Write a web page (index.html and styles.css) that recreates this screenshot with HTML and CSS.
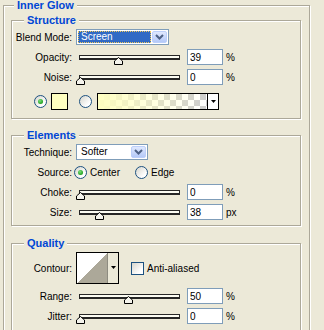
FILE: index.html
```html
<!DOCTYPE html>
<html lang="en">
<head>
    <meta charset="UTF-8">
    <meta name="viewport" content="width=device-width, initial-scale=1.0">
    <title>Inner Glow</title>
    <link rel="stylesheet" href="styles.css">
</head>
<body>
    <fieldset class="panel">
        <legend class="panel-title">Inner Glow</legend>

        <fieldset class="group structure">
            <legend class="group-title">Structure</legend>
            <div class="row">
                <span class="label">Blend Mode:</span>
                <div class="select select-blend">
                    <span class="select-value selected">Screen</span>
                    <span class="select-button">
                        <svg width="9" height="6" viewBox="0 0 9 6"><polyline points="1,1 4.5,4.5 8,1" fill="none" stroke="#4d6185" stroke-width="2"/></svg>
                    </span>
                </div>
            </div>
            <div class="row">
                <span class="label">Opacity:</span>
                <div class="slider">
                    <div class="track"></div>
                    <svg class="thumb" style="left: 35px" width="9" height="8" viewBox="0 0 9 8"><path d="M4.5 0.5 L8.5 4 V7.5 H0.5 V4 Z" fill="#f4f3ec" stroke="#000"/></svg>
                </div>
                <input class="field" type="text" value="39">
                <span class="unit">%</span>
            </div>
            <div class="row">
                <span class="label">Noise:</span>
                <div class="slider">
                    <div class="track"></div>
                    <svg class="thumb" style="left: -3px" width="9" height="8" viewBox="0 0 9 8"><path d="M4.5 0.5 L8.5 4 V7.5 H0.5 V4 Z" fill="#f4f3ec" stroke="#000"/></svg>
                </div>
                <input class="field" type="text" value="0">
                <span class="unit">%</span>
            </div>
            <div class="row color-row">
                <span class="radio checked"></span>
                <span class="swatch"></span>
                <span class="radio radio-gradient"></span>
                <div class="gradient">
                    <span class="gradient-fill"></span>
                    <span class="gradient-button">
                        <svg width="5" height="3" viewBox="0 0 5 3"><polygon points="0,0 5,0 2.5,3" fill="#000"/></svg>
                    </span>
                </div>
            </div>
        </fieldset>

        <fieldset class="group elements">
            <legend class="group-title">Elements</legend>
            <div class="row">
                <span class="label">Technique:</span>
                <div class="select select-technique">
                    <span class="select-value">Softer</span>
                    <span class="select-button">
                        <svg width="9" height="6" viewBox="0 0 9 6"><polyline points="1,1 4.5,4.5 8,1" fill="none" stroke="#4d6185" stroke-width="2"/></svg>
                    </span>
                </div>
            </div>
            <div class="row">
                <span class="label">Source:</span>
                <div class="options">
                    <span class="option"><span class="radio checked"></span><span class="option-text">Center</span></span>
                    <span class="option"><span class="radio"></span><span class="option-text">Edge</span></span>
                </div>
            </div>
            <div class="row">
                <span class="label">Choke:</span>
                <div class="slider">
                    <div class="track"></div>
                    <svg class="thumb" style="left: -3px" width="9" height="8" viewBox="0 0 9 8"><path d="M4.5 0.5 L8.5 4 V7.5 H0.5 V4 Z" fill="#f4f3ec" stroke="#000"/></svg>
                </div>
                <input class="field" type="text" value="0">
                <span class="unit">%</span>
            </div>
            <div class="row">
                <span class="label">Size:</span>
                <div class="slider">
                    <div class="track"></div>
                    <svg class="thumb" style="left: 16px" width="9" height="8" viewBox="0 0 9 8"><path d="M4.5 0.5 L8.5 4 V7.5 H0.5 V4 Z" fill="#f4f3ec" stroke="#000"/></svg>
                </div>
                <input class="field" type="text" value="38">
                <span class="unit">px</span>
            </div>
        </fieldset>

        <fieldset class="group quality">
            <legend class="group-title">Quality</legend>
            <div class="row contour-row">
                <span class="label">Contour:</span>
                <div class="contour">
                    <svg class="contour-preview" width="30" height="30" viewBox="0 0 30 30" shape-rendering="crispEdges">
                        <rect width="30" height="30" fill="#fff"/>
                        <polygon points="0,30 30,0 30,30" fill="#aca899"/>
                    </svg>
                    <span class="contour-button">
                        <svg width="5" height="3" viewBox="0 0 5 3"><polygon points="0,0 5,0 2.5,3" fill="#000"/></svg>
                    </span>
                </div>
                <span class="checkbox"></span>
                <span class="check-text">Anti-aliased</span>
            </div>
            <div class="row">
                <span class="label">Range:</span>
                <div class="slider">
                    <div class="track"></div>
                    <svg class="thumb" style="left: 45px" width="9" height="8" viewBox="0 0 9 8"><path d="M4.5 0.5 L8.5 4 V7.5 H0.5 V4 Z" fill="#f4f3ec" stroke="#000"/></svg>
                </div>
                <input class="field" type="text" value="50">
                <span class="unit">%</span>
            </div>
            <div class="row">
                <span class="label">Jitter:</span>
                <div class="slider">
                    <div class="track"></div>
                    <svg class="thumb" style="left: -3px" width="9" height="8" viewBox="0 0 9 8"><path d="M4.5 0.5 L8.5 4 V7.5 H0.5 V4 Z" fill="#f4f3ec" stroke="#000"/></svg>
                </div>
                <input class="field" type="text" value="0">
                <span class="unit">%</span>
            </div>
        </fieldset>
    </fieldset>
</body>
</html>
```

FILE: styles.css
```css
body {
    margin: 0;
    background-color: #ece9d8;
    font-family: "Liberation Sans", Arial, sans-serif;
    font-size: 10px;
    color: #000;
}
.panel {
    width: 307px;
    box-sizing: border-box;
    margin: 0 0 0 3px;
    padding: 4px 8px 10px 7px;
    border: 1px solid #aca899;
    box-shadow: inset 1px 1px 0 #fff, 1px 1px 0 #fff;
    min-inline-size: 0;
}
.panel-title,
.group-title {
    padding: 0 3px;
    font-weight: bold;
    font-size: 11px;
    line-height: 11px;
    color: #0046d5;
    background-color: #ece9d8;
}
.panel-title {
    margin-left: 3px;
}
.group-title {
    margin-left: 12px;
}
.group {
    margin: 0;
    padding: 3px 0 8px;
    border: 1px solid #aca899;
    box-shadow: inset 1px 1px 0 #fff, 1px 1px 0 #fff;
    min-inline-size: 0;
}
.elements {
    margin-top: 11px;
    padding-bottom: 5px;
}
.quality {
    margin-top: 12px;
}
.row {
    display: flex;
    align-items: center;
    height: 16px;
}
.row + .row {
    margin-top: 4px;
}
.label {
    flex: none;
    width: 60px;
    margin-right: 4px;
    text-align: right;
}

/* combo boxes */
.select {
    display: flex;
    box-sizing: border-box;
    height: 16px;
    padding: 1px;
    border: 1px solid #7f9db9;
    background-color: #fff;
}
.select-blend {
    width: 93px;
}
.select-technique {
    width: 72px;
}
.select-value {
    flex: 1;
    padding-left: 3px;
    line-height: 12px;
}
.selected {
    margin-right: 1px;
    color: #fff;
    background-color: #316ac5;
    outline: 1px dotted #f0c85a;
    outline-offset: -1px;
}
.select-button {
    display: flex;
    align-items: center;
    justify-content: center;
    width: 15px;
    box-sizing: border-box;
    border: 1px solid #bccffa;
    border-radius: 2px;
    background: linear-gradient(#dfe8fe, #b4c9f8);
}

/* sliders */
.slider {
    position: relative;
    flex: none;
    width: 101px;
    height: 16px;
    margin-left: 3px;
}
.track {
    box-sizing: border-box;
    height: 5px;
    margin-top: 6px;
    border: 1px solid #262626;
    border-bottom-width: 2px;
    background-color: #fbfbf2;
}
.thumb {
    position: absolute;
    top: 8px;
    display: block;
}
.field {
    flex: none;
    box-sizing: border-box;
    width: 36px;
    height: 16px;
    margin: 0 0 0 7px;
    padding: 0 0 0 2px;
    border: 1px solid #7f9db9;
    background-color: #fff;
    font-family: "Liberation Sans", Arial, sans-serif;
    font-size: 10px;
    color: #000;
}
.unit {
    margin-left: 3px;
}

/* radio buttons and check box */
.radio,
.checkbox {
    flex: none;
    box-sizing: border-box;
    width: 13px;
    height: 13px;
    border: 1px solid #1c5180;
    background: linear-gradient(135deg, #d6d5cc, #fff 75%);
}
.radio {
    display: flex;
    align-items: center;
    justify-content: center;
    border-radius: 50%;
}
.radio.checked::after {
    content: "";
    width: 5px;
    height: 5px;
    border-radius: 50%;
    background: radial-gradient(circle at 40% 35%, #7be07b, #21a121 70%);
}
.options {
    display: flex;
    margin-left: -2px;
}
.option {
    display: flex;
    align-items: center;
    width: 61px;
}
.option-text {
    margin-left: 3px;
}

/* colour and gradient */
.color-row {
    height: 17px;
    padding-left: 22px;
}
.row.color-row {
    margin-top: 8px;
}
.swatch {
    box-sizing: border-box;
    width: 17px;
    height: 17px;
    margin-left: 4px;
    border: 1px solid #000;
    background-color: #ffffc0;
}
.radio-gradient {
    margin-left: 11px;
}
.gradient {
    display: flex;
    box-sizing: border-box;
    width: 122px;
    height: 17px;
    margin-left: 5px;
    border: 1px solid #000;
}
.gradient-fill {
    flex: 1;
    background-image: linear-gradient(to right, #ffffc0, rgba(255, 255, 192, 0)), repeating-conic-gradient(#cdcdcd 0 25%, #fff 0 50%);
    background-size: auto, 12px 12px;
}
.gradient-button,
.contour-button {
    display: flex;
    align-items: center;
    justify-content: center;
    border-left: 1px solid #000;
}
.gradient-button {
    width: 10px;
    background-color: #fff;
}

/* contour */
.row.contour-row {
    height: 32px;
}
.contour {
    display: flex;
    box-sizing: border-box;
    width: 43px;
    height: 32px;
    border: 1px solid #000;
}
.contour-preview {
    display: block;
}
.contour-button {
    flex: 1;
    align-items: flex-start;
    padding-top: 13px;
    border-left-color: #8d8b80;
    background-color: #ece9d8;
}
.checkbox {
    margin-left: 12px;
}
.check-text {
    margin-left: 3px;
}
```
